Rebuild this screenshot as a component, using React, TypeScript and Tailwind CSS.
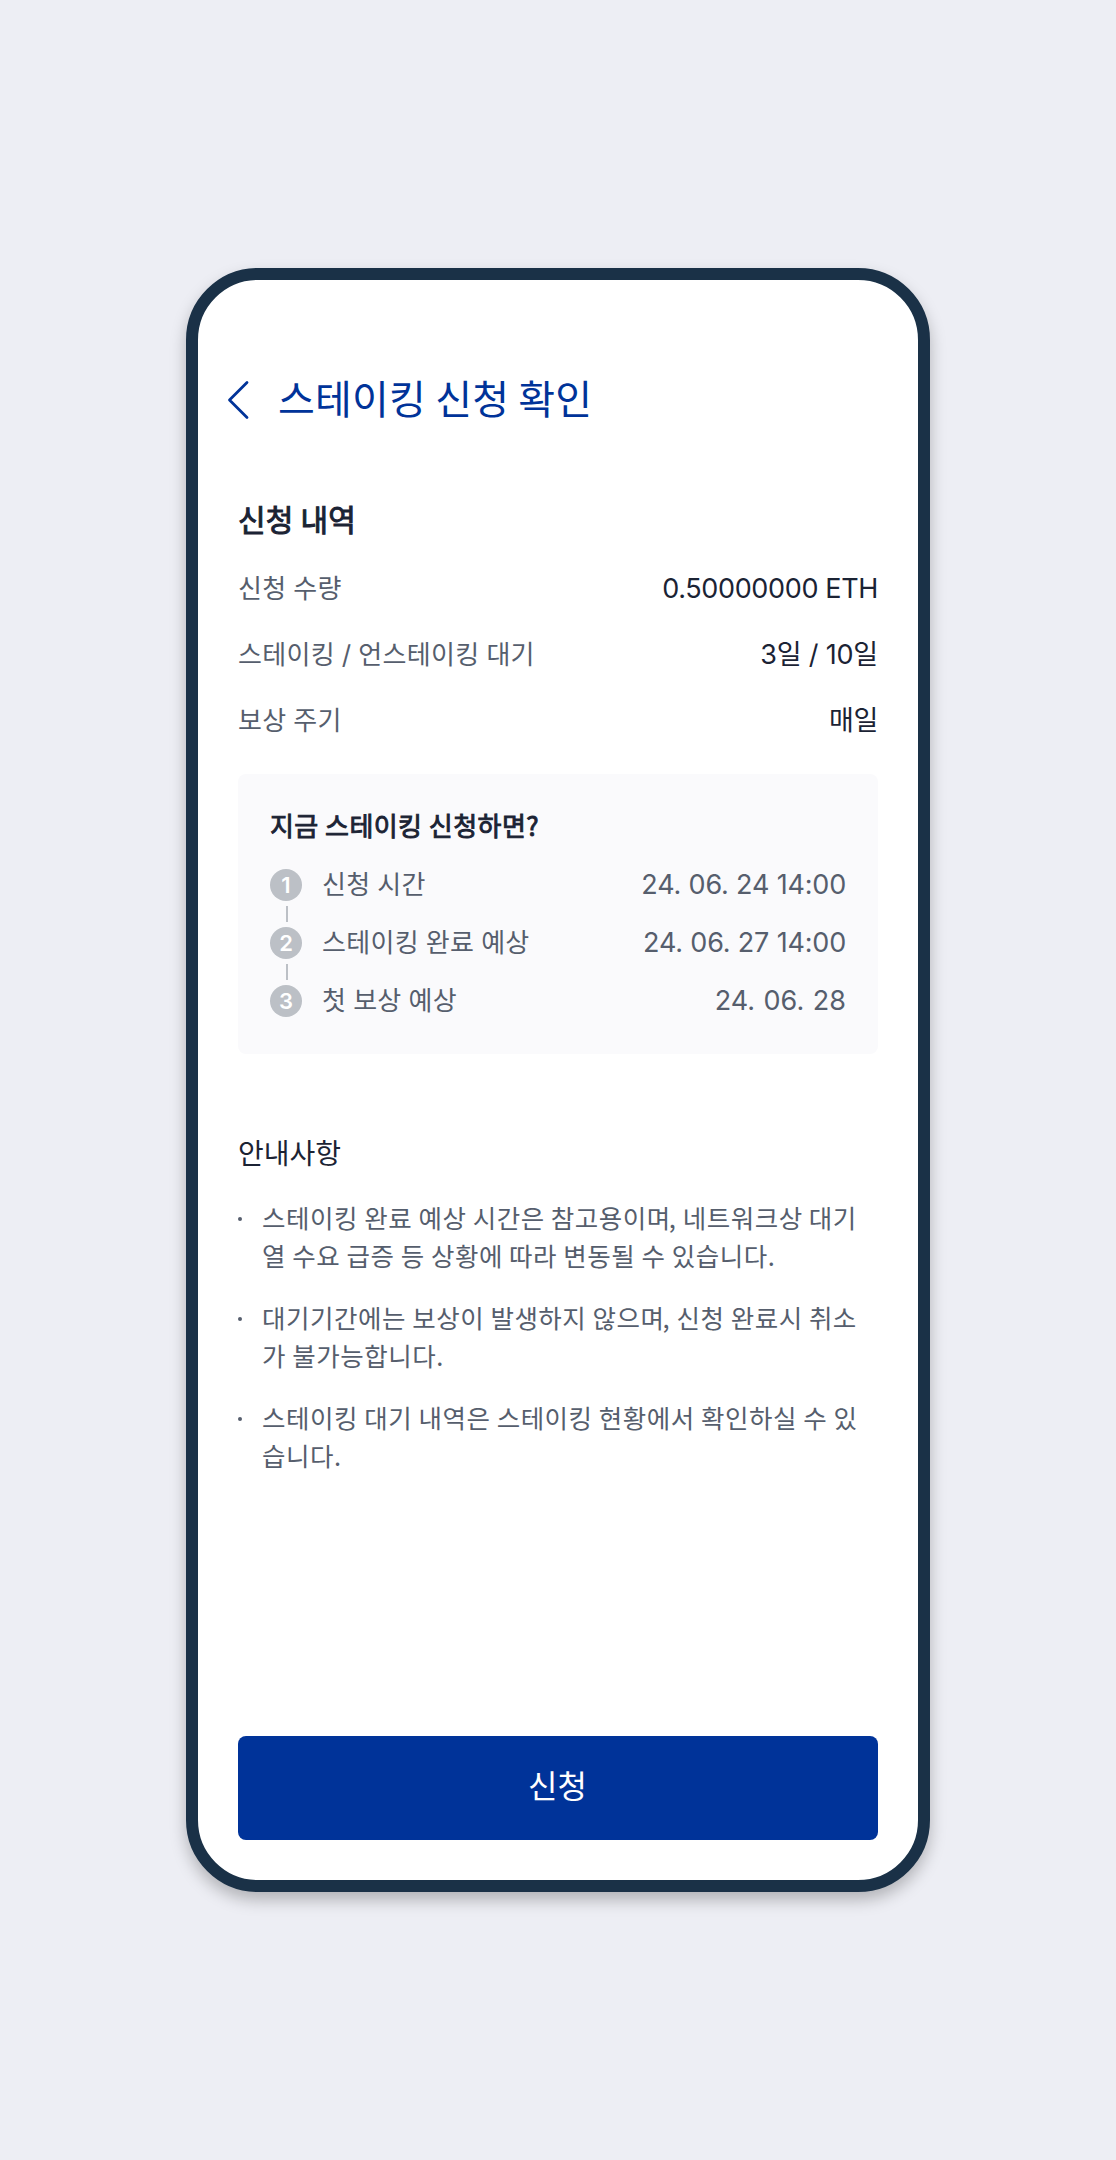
import { Fragment } from "react";

const krFont = "font-['Noto_Sans_CJK_KR',sans-serif]";
const mixedFont = "font-['Inter','Noto_Sans_CJK_KR',sans-serif]";
const labelText = "text-[26px] leading-[40px] tracking-[0.3px] [word-spacing:-0.7px]";

const details = [
    { label: "신청 수량", value: "0.50000000 ETH", spacing: "tracking-[-0.35px]" },
    { label: "스테이킹 / 언스테이킹 대기", value: "3일 / 10일", spacing: "tracking-[-0.2px]" },
    { label: "보상 주기", value: "매일", spacing: "tracking-[-0.35px]" },
];

const steps = [
    { label: "신청 시간", date: "24. 06. 24 14:00", spacing: "tracking-[-0.18px]" },
    { label: "스테이킹 완료 예상", date: "24. 06. 27 14:00", spacing: "tracking-[-0.18px]" },
    { label: "첫 보상 예상", date: "24. 06. 28", spacing: "[word-spacing:1px]" },
];

const notices = [
    ["스테이킹 완료 예상 시간은 참고용이며, 네트워크상 대기", "열 수요 급증 등 상황에 따라 변동될 수 있습니다."],
    ["대기기간에는 보상이 발생하지 않으며, 신청 완료시 취소", "가 불가능합니다."],
    ["스테이킹 대기 내역은 스테이킹 현황에서 확인하실 수 있", "습니다."],
];

// pulls the comma a little closer to the word before it
const NoticeLine = ({ text }: { text: string }) => (
    <span className="block">
        {text.split(",").map((part, i) => (
            <Fragment key={part}>
                {i > 0 && <span className="-ml-[2px]">,</span>}
                {part}
            </Fragment>
        ))}
    </span>
);

const App = () => {
    return (
        <main className={`${krFont} flex h-[2160px] w-[1116px] items-center justify-center bg-[#edeef4] text-[#1b2334]`}>
            <div className="flex h-[1624px] w-[744px] flex-col rounded-[72px] border-[12px] border-[#1a3147] bg-white px-10 pb-10 shadow-[0_8px_16px_rgba(0,0,0,0.25)]">

                <header className="-ml-4 mt-[88px] flex h-16 items-center text-[#003399]">
                    <svg width="32" height="40" viewBox="0 0 32 40" fill="none" stroke="currentColor" strokeWidth="2.8" strokeLinecap="round" strokeLinejoin="round">
                        <path d="M25 2.5 7.5 20 25 37.5" />
                    </svg>
                    <h1 className="ml-[24px] pb-[5px] text-[40px] leading-[57px] tracking-[0.2px]">스테이킹 신청 확인</h1>
                </header>

                <section className="mt-[66px]">
                    <h2 className="text-[30px] leading-[40px] tracking-[0.2px] [-webkit-text-stroke:1px_currentColor]">신청 내역</h2>
                    <dl className={`${mixedFont} mt-[31px] space-y-[26px]`}>
                        {details.map((item) => (
                            <div key={item.label} className="flex h-10 items-center justify-between">
                                <dt className={`${labelText} text-[#565e6d]`}>{item.label}</dt>
                                <dd className={`${item.spacing} text-[27px] leading-[40px]`}>{item.value}</dd>
                            </div>
                        ))}
                    </dl>
                </section>

                <section className="mt-[33px] h-[280px] rounded-lg bg-[#fafafc] px-8 pt-[31px]">
                    <h3 className="text-[26px] leading-[40px] tracking-[0.45px] [-webkit-text-stroke:0.9px_currentColor]">지금 스테이킹 신청하면?</h3>
                    <ol className={`${mixedFont} mt-[20px] text-[#565e6d]`}>
                        {steps.map((step, i) => (
                            <li key={step.label} className="flex h-[58px] items-start">
                                <div className="flex w-8 flex-col items-center pt-1">
                                    <span className="flex size-8 items-center justify-center rounded-full bg-[#bcc0c6] text-[22px] font-semibold leading-8 text-white">{i + 1}</span>
                                    {i < steps.length - 1 && <span className="ml-[2px] mt-[5px] h-4 w-[2px] bg-[#bcc0c6]" />}
                                </div>
                                <span className={`${labelText} ml-5`}>{step.label}</span>
                                <span className={`${step.spacing} ml-auto text-[27px] leading-[40px]`}>{step.date}</span>
                            </li>
                        ))}
                    </ol>
                </section>

                <section className="mt-[78px]">
                    <h3 className="text-[28px] leading-[40px]">안내사항</h3>
                    <ul className="mt-[26px] space-y-6 text-[25.5px] leading-[38px] tracking-[0.53px] text-[#565e6d]">
                        {notices.map((lines) => (
                            <li key={lines[0]} className="flex">
                                <span className="mr-5 mt-[19px] size-1 shrink-0 rounded-full bg-[#565e6d]" />
                                <p className="whitespace-nowrap">
                                    {lines.map((line) => (
                                        <NoticeLine key={line} text={line} />
                                    ))}
                                </p>
                            </li>
                        ))}
                    </ul>
                </section>

                <button className="mt-auto h-[104px] w-full rounded-lg bg-[#003399] pb-[9px] pr-[1px] text-[32px] leading-[48px] text-white">
                    신청
                </button>
            </div>
        </main>
    );
};
export default App;
